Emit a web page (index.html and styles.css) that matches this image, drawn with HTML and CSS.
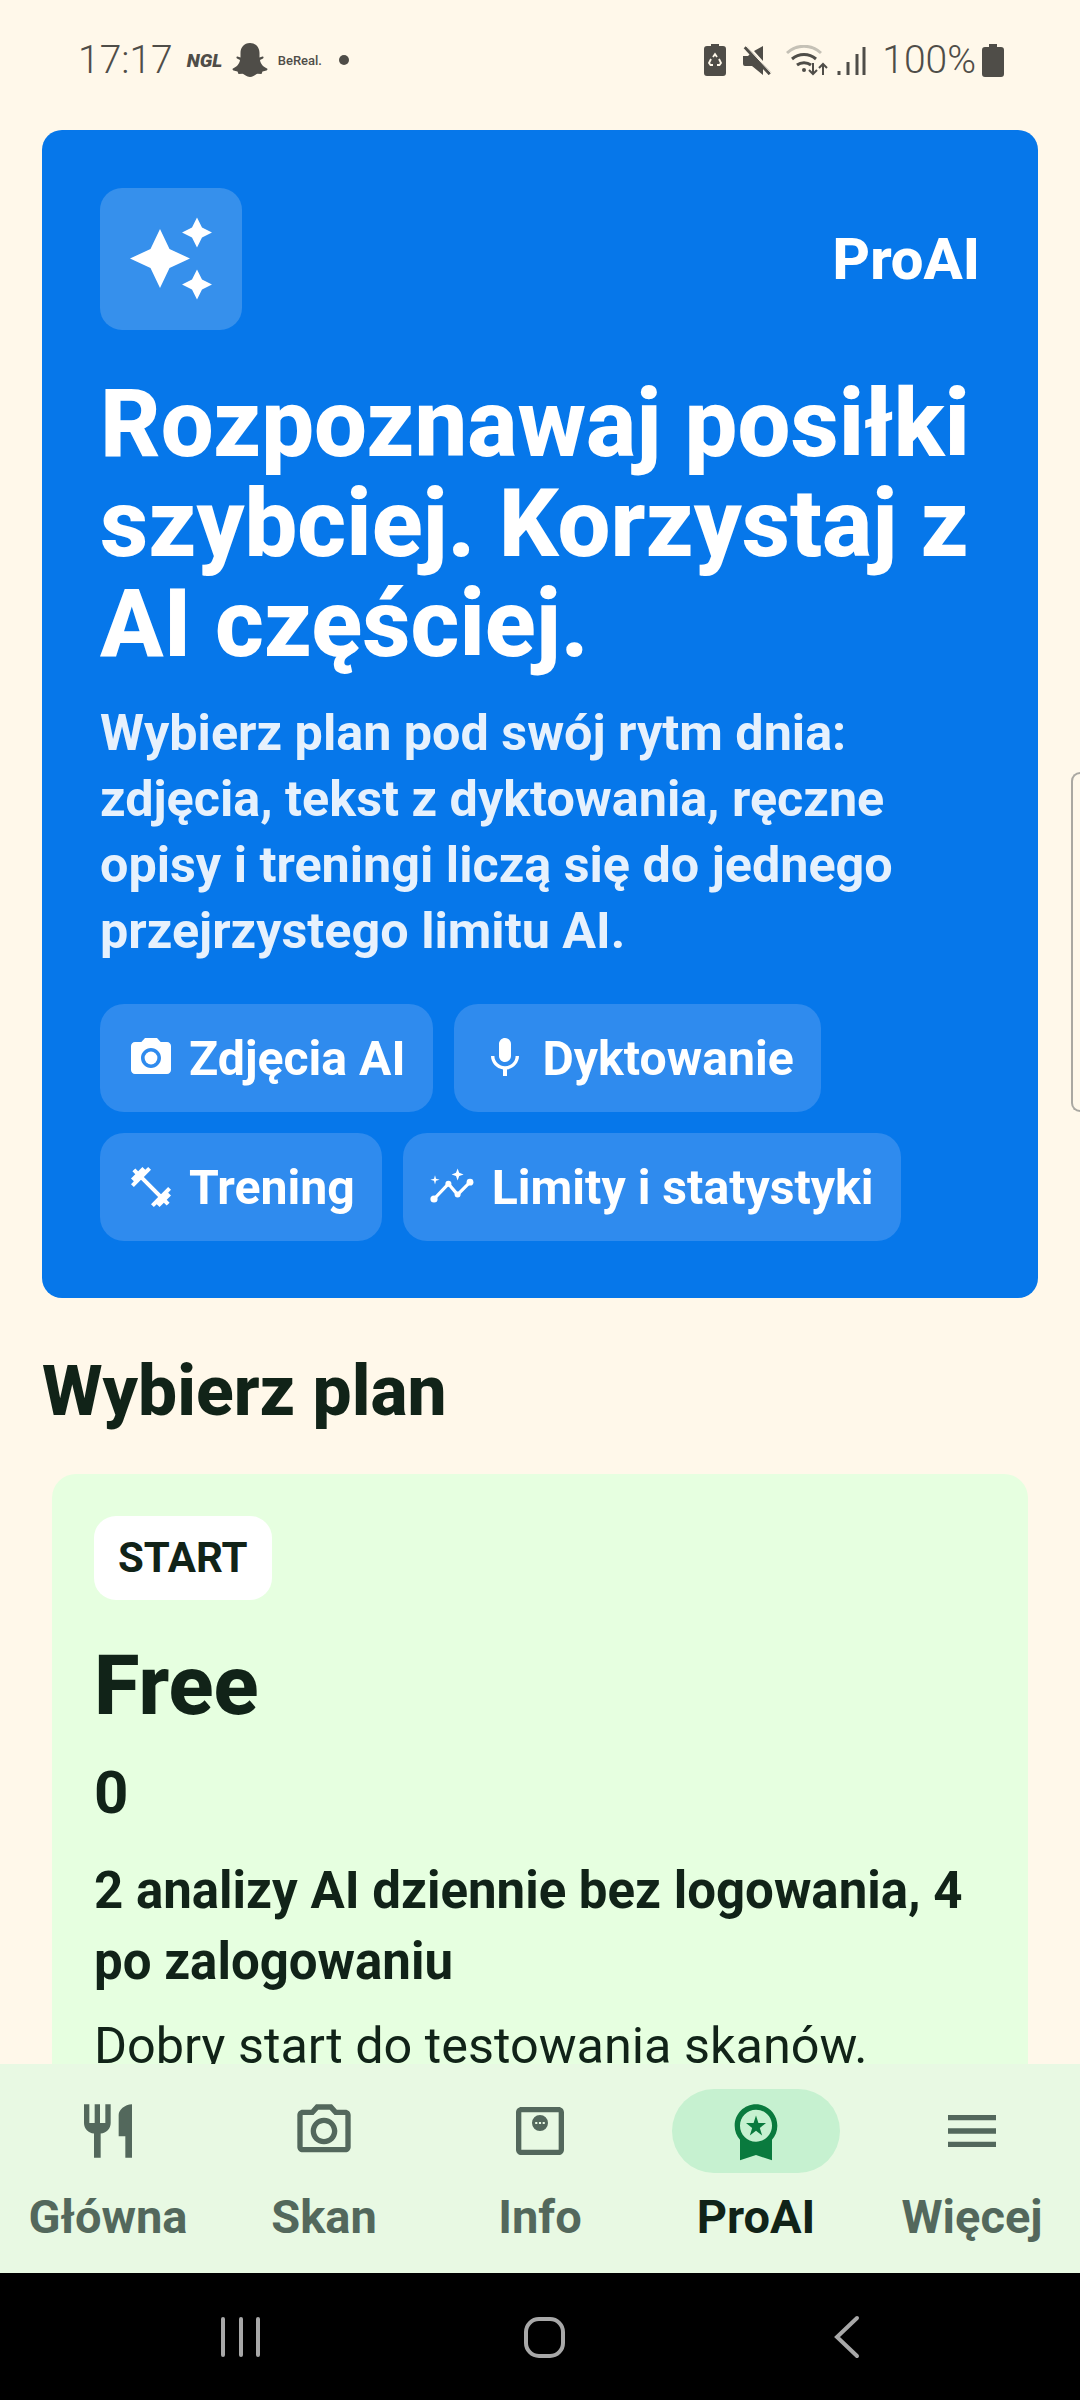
FILE: index.html
```html
<!DOCTYPE html>
<html lang="pl">
<head>
<meta charset="utf-8">
<title>ProAI</title>
<link rel="stylesheet" href="styles.css">
</head>
<body>
  <div class="screen">
    <div class="status">
      <div class="status-left">
        <span class="clock">17:17</span>
        <span class="ngl">NGL</span>
        <svg class="ghost" viewBox="0 0 36 34"><path fill="#4f4d48" d="M18 0c6 0 9.500 4.500 9.500 10v4.500l3-1c1 0 1.500 1 .5 2l-3 1.500c.5 4 3.500 7 7 8.500.8.500.5 1.500-.5 2l-4 1-1 2.500-4-.2c-2 .5-4 3.200-7.500 3.200s-5.500-2.700-7.500-3.200l-4 .2-1-2.500-4-1c-1-.5-1.300-1.500-.5-2 3.500-1.500 6.500-4.500 7-8.500L5 15.500c-1-1-.5-2 .5-2l3 1V10C8.500 4.500 12 0 18 0z"/></svg>
        <span class="bereal">BeReal.</span>
        <span class="dot"></span>
      </div>
      <div class="status-right">
        <svg class="st-recycle" viewBox="0 0 22 32"><path fill="#4f4d48" d="M7 0h8v2h4a3 3 0 0 1 3 3v24a3 3 0 0 1-3 3H3a3 3 0 0 1-3-3V5a3 3 0 0 1 3-3h4z"/><path fill="none" stroke="#fff8ea" stroke-width="1.800" d="M9 13l2-3 2 3M15 15l2 4-1.500 2H13M9 21H6.500L5 19l2-4"/></svg>
        <svg class="st-mute" viewBox="0 0 29 29"><path fill="#4f4d48" d="M0 10h5l2-2 13 13v1L20 29 9 20H2a2 2 0 0 1-2-2zM11 5l9-5v15z"/><path d="M2 1l25 27" stroke="#4f4d48" stroke-width="3.500"/><path d="M3 0l26 28" stroke="#fff8ea" stroke-width="1"/></svg>
        <svg class="st-wifi" viewBox="0 0 42 31"><path d="M1 8c10-9 24-9 34 0" fill="none" stroke="#c5c1b6" stroke-width="3"/><path d="M6 14c7-6 17-6 24 0M11 20c4-3 10-3 14 0" fill="none" stroke="#4f4d48" stroke-width="3"/><circle cx="18" cy="25" r="2" fill="#4f4d48"/><path d="M27 18v11m-4-4l4 4 4-4M37 30V19m-4 4l4-4 4 4" fill="none" stroke="#4f4d48" stroke-width="2"/></svg>
        <svg class="st-bars" viewBox="0 0 29 29"><path d="M2 29v-4M11 29V16M20 29V8M27 29V1" stroke="#4f4d48" stroke-width="3"/></svg>
        <span class="pct">100%</span>
        <svg class="st-batt" viewBox="0 0 22 33"><path fill="#4f4d48" d="M7 0h8v3h4a3 3 0 0 1 3 3v24a3 3 0 0 1-3 3H3a3 3 0 0 1-3-3V6a3 3 0 0 1 3-3h4z"/></svg>
      </div>
    </div>

    <main class="content">
      <section class="hero">
        <div class="hero-top">
          <div class="spark-box">
            <svg viewBox="0 0 142 142" width="142" height="142"><path fill="#fff" d="M60 41l9.500 20 20.500 9.500-20.500 9.500L60 100l-9.500-20L30 70.500 50.500 61zM97 29.500l5 10 10 5-10 5-5 10-5-10-10-5 10-5zM97 81.500l5 10 10 5-10 5-5 10-5-10-10-5 10-5z"/></svg>
          </div>
          <span class="hero-brand">ProAI</span>
        </div>
        <h1>Rozpoznawaj posiłki szybciej. Korzystaj z AI częściej.</h1>
        <p class="hero-text">Wybierz plan pod swój rytm dnia: zdjęcia, tekst z dyktowania, ręczne opisy i treningi liczą się do jednego przejrzystego limitu AI.</p>
        <div class="chips">
          <div class="chip">
            <svg viewBox="0 0 24 24"><circle cx="12" cy="12" r="3.200" fill="#fff"/><path fill="#fff" d="M9 2L7.170 4H4c-1.100 0-2 .9-2 2v12c0 1.100.9 2 2 2h16c1.100 0 2-.9 2-2V6c0-1.100-.9-2-2-2h-3.170L15 2H9zm3 15c-2.760 0-5-2.240-5-5s2.240-5 5-5 5 2.240 5 5-2.240 5-5 5z"/></svg>
            Zdjęcia AI
          </div>
          <div class="chip">
            <svg viewBox="0 0 24 24"><path fill="#fff" d="M12 14c1.660 0 3-1.340 3-3V5c0-1.660-1.340-3-3-3S9 3.340 9 5v6c0 1.660 1.340 3 3 3zm5.300-3c0 3-2.540 5.100-5.300 5.100S6.700 14 6.700 11H5c0 3.410 2.720 6.230 6 6.720V21h2v-3.280c3.280-.48 6-3.300 6-6.720h-1.700z"/></svg>
            Dyktowanie
          </div>
          <div class="chip">
            <svg viewBox="0 0 24 24"><path fill="#fff" d="M20.570 14.860L22 13.430 20.570 12 17 15.570 8.430 7 12 3.430 10.570 2 9.140 3.430 7.710 2 5.570 4.140 4.140 2.710 2.710 4.140l1.430 1.430L2 7.710l1.430 1.430L2 10.570 3.430 12 7 8.430 15.570 17 12 20.570 13.430 22l1.430-1.430L16.290 22l2.140-2.140 1.430 1.430 1.430-1.430-1.430-1.430L22 16.290z"/></svg>
            Trening
          </div>
          <div class="chip">
            <svg viewBox="0 0 24 24"><path fill="none" stroke="#fff" stroke-width="1.600" stroke-linejoin="round" d="M2 18l7.200-7.600 4.600 5.400 6.200-6.200"/><circle cx="2" cy="18" r="1.800" fill="#fff"/><circle cx="9.200" cy="10.400" r="1.500" fill="#fff"/><circle cx="13.800" cy="15.800" r="1.500" fill="#fff"/><circle cx="20" cy="9.600" r="1.700" fill="#fff"/><path fill="#fff" d="M2.500 6.100l.5 1.800 1.800.5-1.800.5-.5 1.800-.5-1.800-1.800-.5 1.800-.5zM13.800 2.700l.8 2.200 2.200.8-2.200.8-.8 2.200-.8-2.200-2.200-.8 2.200-.8z"/></svg>
            Limity i statystyki
          </div>
        </div>
      </section>

      <h2 class="section-title">Wybierz plan</h2>

      <section class="plan">
        <span class="plan-tag">START</span>
        <h3>Free</h3>
        <div class="plan-price">0</div>
        <p class="plan-lead">2 analizy AI dziennie bez logowania, 4 po zalogowaniu</p>
        <p class="plan-text">Dobry start do testowania skanów.</p>
      </section>
    </main>

    <nav class="tabs">
      <div class="tab">
        <span class="tab-icon">
          <svg viewBox="0 0 24 24"><path d="M11 9H9V2H7v7H5V2H3v7c0 2.120 1.660 3.840 3.750 3.970V22h2.500v-9.030C11.340 12.840 13 11.120 13 9V2h-2v7zm5-3v8h2.500v8H21V2c-2.760 0-5 2.240-5 4z"/></svg>
        </span>
        <span class="tab-label">Główna</span>
      </div>
      <div class="tab">
        <span class="tab-icon">
          <svg viewBox="0 0 24 24"><path d="M14.120 4l1.830 2H20v12H4V6h4.050l1.830-2h4.240M15 2H9L7.170 4H4c-1.100 0-2 .9-2 2v12c0 1.100.9 2 2 2h16c1.100 0 2-.9 2-2V6c0-1.100-.9-2-2-2h-3.170L15 2zm-3 7c1.650 0 3 1.350 3 3s-1.350 3-3 3-3-1.350-3-3 1.350-3 3-3m0-2c-2.760 0-5 2.240-5 5s2.240 5 5 5 5-2.240 5-5-2.240-5-5-5z"/></svg>
        </span>
        <span class="tab-label">Skan</span>
      </div>
      <div class="tab">
        <span class="tab-icon">
          <svg viewBox="0 0 24 24"><path fill-rule="evenodd" d="M5 3h14c1.100 0 2 .9 2 2v14c0 1.100-.9 2-2 2H5c-1.100 0-2-.9-2-2V5c0-1.100.9-2 2-2zm0 2v14h14V5zm7 1a3 3 0 1 1 0 6 3 3 0 0 1 0-6zm-1.800 2.600v.8h.8v-.8zm1.400 0v.8h.8v-.8zm1.400 0v.8h.8v-.8z"/></svg>
        </span>
        <span class="tab-label">Info</span>
      </div>
      <div class="tab tab-active">
        <span class="tab-icon">
          <svg viewBox="0 0 24 24"><path d="M9.680 13.690L12 11.930l2.310 1.760-.88-2.850L15.750 9h-2.840L12 6.190 11.090 9H8.250l2.310 1.840-.88 2.850zM20 10c0-4.420-3.580-8-8-8s-8 3.580-8 8c0 2.030.76 3.870 2 5.280V23l6-2 6 2v-7.720c1.240-1.410 2-3.250 2-5.280zm-8-6c3.310 0 6 2.690 6 6s-2.690 6-6 6-6-2.690-6-6 2.690-6 6-6z"/></svg>
        </span>
        <span class="tab-label">ProAI</span>
      </div>
      <div class="tab">
        <span class="tab-icon">
          <svg viewBox="0 0 24 24"><path d="M3 18h18v-2H3v2zm0-5h18v-2H3v2zm0-7v2h18V6H3z"/></svg>
        </span>
        <span class="tab-label">Więcej</span>
      </div>
    </nav>

    <div class="sys-nav">
      <svg width="44" height="44" viewBox="0 0 44 44"><path d="M4 4v36M22 4v36M39 4v36" stroke="#a8a8a8" stroke-width="4" stroke-linecap="round"/></svg>
      <svg width="44" height="44" viewBox="0 0 44 44"><rect x="4" y="4" width="37" height="37" rx="13" fill="none" stroke="#a8a8a8" stroke-width="4"/></svg>
      <svg width="44" height="44" viewBox="0 0 44 44"><path d="M33 3L13 22l20 19" fill="none" stroke="#a8a8a8" stroke-width="4" stroke-linecap="round"/></svg>
    </div>
    <div class="edge-handle"></div>
  </div>
</body>
</html>
```

FILE: styles.css
```css
* {
    box-sizing: border-box;
}

body {
    margin: 0;
    background-color: #fff8ea;
    font-family: Roboto, "Noto Sans", sans-serif;
}

.screen {
    position: relative;
    display: flex;
    flex-direction: column;
    width: 1080px;
    height: 2400px;
    overflow: hidden;
}

.status {
    display: flex;
    justify-content: space-between;
    align-items: center;
    height: 122px;
    padding: 0 76px 2px 78px;
    color: #4f4d48;
}

.status-left,
.status-right {
    display: flex;
    align-items: center;
}

.clock {
    font-size: 39px;
    font-weight: 350;
    margin-right: 14px;
}

.ngl {
    width: 36px;
    font-size: 19px;
    font-weight: 900;
    font-style: italic;
    white-space: nowrap;
    margin-right: 9px;
}

.ghost {
    width: 36px;
    height: 34px;
    margin-right: 10px;
}

.bereal {
    width: 40px;
    font-size: 13px;
    font-weight: 500;
    white-space: nowrap;
    margin-right: 21px;
}

.dot {
    width: 10px;
    height: 10px;
    border-radius: 50%;
    background-color: #4f4d48;
}

.st-recycle {
    width: 22px;
    height: 32px;
    margin-right: 17px;
}

.st-mute {
    width: 29px;
    height: 29px;
    margin-right: 14px;
}

.st-wifi {
    width: 42px;
    height: 31px;
    margin-right: 9px;
}

.st-bars {
    width: 29px;
    height: 29px;
    margin-right: 16px;
}

.pct {
    font-size: 39px;
    font-weight: 350;
    margin-right: 6px;
}

.st-batt {
    width: 22px;
    height: 33px;
}

.content {
    flex: 1;
    min-height: 0;
    overflow: hidden;
    padding: 8px 42px 0;
}

.hero {
    background-color: #0677ea;
    border-radius: 20px;
    padding: 58px 58px 57px;
    color: #fff;
}

.hero-top {
    display: flex;
    justify-content: space-between;
    align-items: center;
}

.spark-box {
    width: 142px;
    height: 142px;
    border-radius: 22px;
    background-color: #3690ec;
}

.hero-brand {
    font-size: 58px;
    font-weight: 800;
}

.hero h1 {
    margin: 44px 0 0;
    font-size: 94px;
    line-height: 100px;
    font-weight: 800;
}

.hero-text {
    margin: 26px 0 0;
    font-size: 50.3px;
    line-height: 66px;
    font-weight: 700;
    color: #e6f1fd;
}

.chips {
    display: flex;
    flex-wrap: wrap;
    gap: 21px;
    margin-top: 40px;
}

.chip {
    display: flex;
    align-items: center;
    gap: 14px;
    height: 108px;
    padding: 0 27px;
    border-radius: 24px;
    background-color: #2f8bee;
    font-size: 48.2px;
    font-weight: 700;
}

.chip svg {
    width: 48px;
    height: 48px;
}

.section-title {
    margin: 52px 0 0;
    font-size: 69.5px;
    line-height: 84px;
    font-weight: 800;
    color: #112318;
}

.plan {
    margin: 40px 10px 0;
    padding: 42px;
    border-radius: 24px;
    background-color: #e6ffe0;
    color: #112318;
}

.plan-tag {
    display: inline-block;
    padding: 0 24px;
    line-height: 84px;
    border-radius: 22px;
    background-color: #fff;
    font-size: 42px;
    font-weight: 700;
}

.plan h3 {
    margin: 36px 0 0;
    font-size: 83px;
    line-height: 100px;
    font-weight: 800;
}

.plan-price {
    margin-top: 21px;
    font-size: 60px;
    line-height: 72px;
    font-weight: 700;
}

.plan-lead {
    margin: 26px 0 0;
    font-size: 51px;
    line-height: 71px;
    font-weight: 700;
}

.plan-text {
    margin: 16px 0 0;
    font-size: 50.4px;
    line-height: 66px;
}

.tabs {
    display: flex;
    flex-shrink: 0;
    height: 209px;
    background-color: #e8f9e3;
}

.tab {
    display: flex;
    flex: 1;
    flex-direction: column;
    align-items: center;
    padding-top: 25px;
    color: #53685c;
}

.tab-icon {
    display: flex;
    justify-content: center;
    align-items: center;
    width: 168px;
    height: 84px;
    border-radius: 42px;
}

.tab-icon svg {
    width: 64px;
    height: 64px;
    fill: currentColor;
}

.tab-active .tab-icon {
    background-color: #c6f1d0;
    color: #0a7a3e;
}

.tab-active .tab-label {
    color: #112318;
}

.tab-label {
    margin-top: 16px;
    font-size: 47px;
    line-height: 56px;
    font-weight: 700;
}

.sys-nav {
    display: flex;
    flex-shrink: 0;
    justify-content: space-between;
    align-items: center;
    height: 127px;
    padding: 0 212px 0 219px;
    background-color: #000;
}

.edge-handle {
    position: absolute;
    top: 772px;
    right: 0;
    width: 9px;
    height: 340px;
    border: 2px solid #aaa8a2;
    border-right: none;
    border-radius: 10px 0 0 10px;
}
```
